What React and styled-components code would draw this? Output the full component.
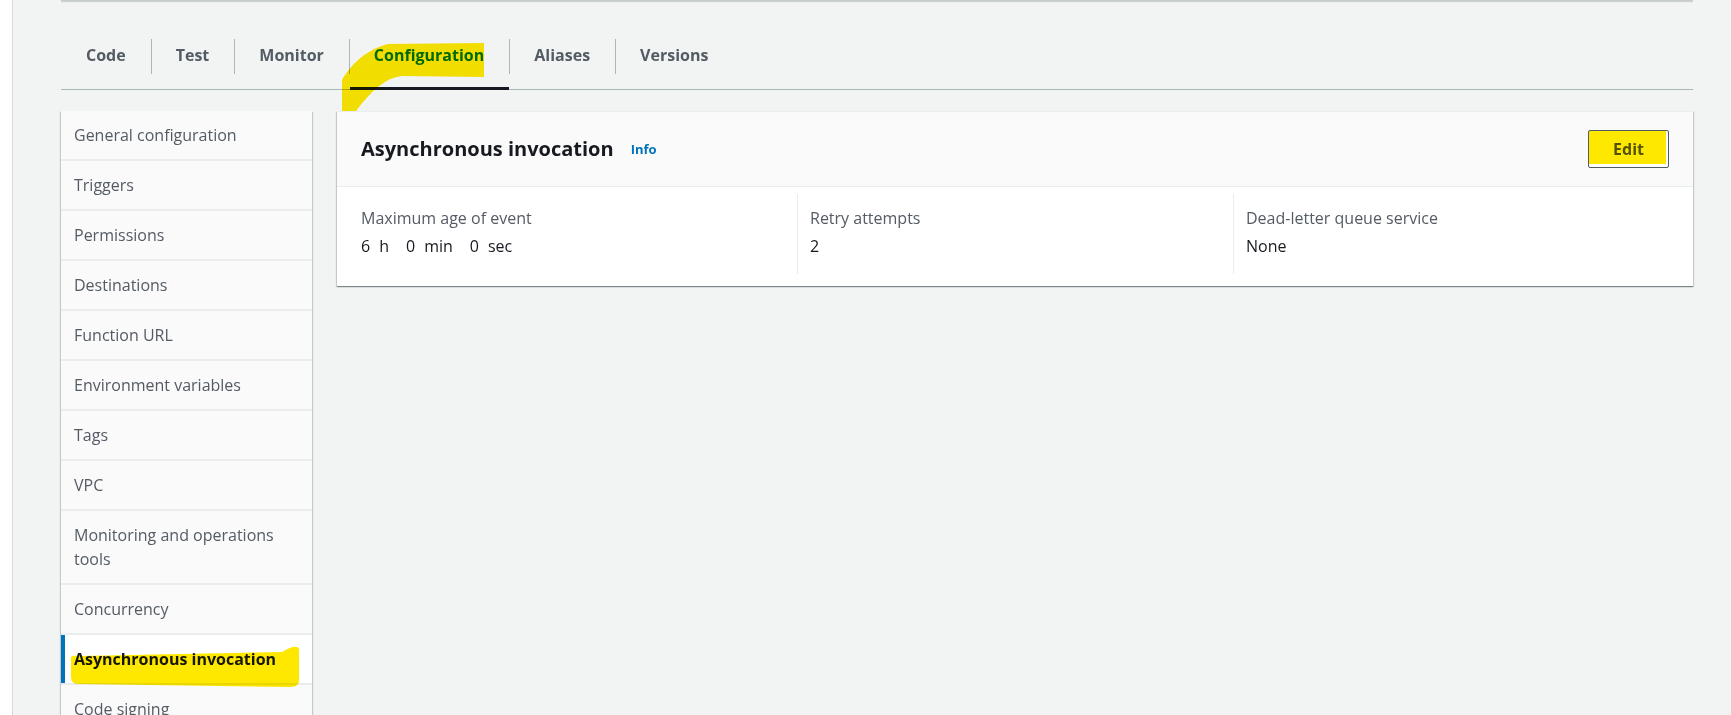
import React from 'react';
import styled, { createGlobalStyle } from 'styled-components';

const GlobalStyle = createGlobalStyle`
  body {
    margin: 0;
    background: #f2f3f3;
    font-family: "Open Sans", Roboto, "Liberation Sans", sans-serif;
    overflow: hidden;
  }
`

const Shell = styled.div`
  position: relative;
  display: flex;
  min-height: 100vh;
`

const Rail = styled.div`
  width: 12px;
  flex-shrink: 0;
  background: #ffffff;
  border-right: 1px solid #d5dbdb;
`

const Main = styled.div`
  flex: 1;
  padding: 0 38px 0 48px;
`

const TopEdge = styled.div`
  height: 1px;
  background: #c6cccc;
  box-shadow: 0 1px 1px rgba(0, 28, 36, 0.2);
`

const TabBar = styled.div`
  display: flex;
  padding-top: 19px;
  border-bottom: 1px solid #aab7b8;
`

const Tab = styled.div`
  position: relative;
  display: flex;
  align-items: center;
  height: 69px;
  padding: 0 25px;
  font-size: 16px;
  font-weight: 700;
  color: ${props => props.active ? '#0073bb' : '#545b64'};

  &:not(:first-child)::before {
    content: '';
    position: absolute;
    left: 0;
    top: 19px;
    height: 35px;
    width: 1px;
    background: #aab7b8;
  }

  &::after {
    content: '';
    display: ${props => props.active ? 'block' : 'none'};
    position: absolute;
    left: 1px;
    right: 0;
    bottom: -1px;
    height: 3px;
    background: #16191f;
  }
`

const Content = styled.div`
  display: grid;
  grid-template-columns: 251px 1fr;
  gap: 25px;
  align-items: start;
  margin-top: 21px;
`

const Sidebar = styled.nav`
  background: #fafafa;
  box-shadow: 0 1px 1px 0 rgba(0, 28, 36, 0.3), 1px 1px 1px 0 rgba(0, 28, 36, 0.15), -1px 1px 1px 0 rgba(0, 28, 36, 0.15);
`

const NavItem = styled.div`
  padding: 12px 12px 12px 13px;
  font-size: 16px;
  line-height: 24px;
  color: ${props => props.active ? '#16191f' : '#545b64'};
  font-weight: ${props => props.active ? 700 : 400};
  background: ${props => props.active ? '#ffffff' : 'transparent'};
  box-shadow: ${props => props.active ? 'inset 4px 0 0 #0073bb' : 'none'};

  &:not(:first-child) {
    border-top: 2px solid #eaeded;
  }
`

const Panel = styled.section`
  background: #ffffff;
  box-shadow: 0 1px 1px 0 rgba(0, 28, 36, 0.3), 1px 1px 1px 0 rgba(0, 28, 36, 0.15), -1px 1px 1px 0 rgba(0, 28, 36, 0.15);
`

const PanelHeader = styled.header`
  display: flex;
  align-items: center;
  justify-content: space-between;
  padding: 18px 24px;
  background: #fafafa;
  border-top: 1px solid #eaeded;
  border-bottom: 1px solid #eaeded;
`

const TitleRow = styled.div`
  display: flex;
  align-items: center;
  gap: 17px;
`

const Title = styled.h2`
  margin: 0;
  font-size: 20px;
  line-height: 28px;
  font-weight: 700;
  color: #16191f;
`

const InfoLink = styled.a`
  font-size: 13px;
  font-weight: 700;
  color: #0073bb;
  text-decoration: none;
`

const Button = styled.button`
  height: 38px;
  padding: 0 24px;
  background: #ffffff;
  border: 1px solid #545b64;
  border-radius: 2px;
  font-family: inherit;
  font-size: 16px;
  font-weight: 700;
  color: #545b64;
`

const PanelBody = styled.div`
  display: grid;
  grid-template-columns: repeat(3, 1fr);
  padding: 7px 24px 12px;
`

const Column = styled.div`
  padding: 12px 0 16px;

  & + & {
    border-left: 1px solid #eaeded;
    padding-left: 12px;
  }
`

const Label = styled.div`
  font-size: 16px;
  line-height: 24px;
  color: #545b64;
`

const Value = styled.div`
  margin-top: 4px;
  font-size: 16px;
  line-height: 24px;
  color: #16191f;
`

const Unit = styled.span`
  margin-right: 17px;
`

const Num = styled.span`
  margin-right: 9px;
`

const Highlighter = styled.svg`
  position: absolute;
  left: 0;
  top: 0;
  pointer-events: none;
  mix-blend-mode: multiply;
`

const tabs = ['Code', 'Test', 'Monitor', 'Configuration', 'Aliases', 'Versions'];

const navItems = [
  'General configuration',
  'Triggers',
  'Permissions',
  'Destinations',
  'Function URL',
  'Environment variables',
  'Tags',
  'VPC',
  'Monitoring and operations tools',
  'Concurrency',
  'Asynchronous invocation',
  'Code signing',
];

function App() {
  return (
    <Shell>
      <GlobalStyle />
      <Rail />
      <Main>
        <TopEdge />
        <TabBar>
          {tabs.map(t => (
            <Tab key={t} active={t === 'Configuration'}>{t}</Tab>
          ))}
        </TabBar>

        <Content>
          <Sidebar>
            {navItems.map(item => (
              <NavItem key={item} active={item === 'Asynchronous invocation'}>{item}</NavItem>
            ))}
          </Sidebar>

          <Panel>
            <PanelHeader>
              <TitleRow>
                <Title>Asynchronous invocation</Title>
                <InfoLink href="#">Info</InfoLink>
              </TitleRow>
              <Button>Edit</Button>
            </PanelHeader>
            <PanelBody>
              <Column>
                <Label>Maximum age of event</Label>
                <Value>
                  <Unit><Num>6</Num>h</Unit>
                  <Unit><Num>0</Num>min</Unit>
                  <span><Num>0</Num>sec</span>
                </Value>
              </Column>
              <Column>
                <Label>Retry attempts</Label>
                <Value>2</Value>
              </Column>
              <Column>
                <Label>Dead-letter queue service</Label>
                <Value>None</Value>
              </Column>
            </PanelBody>
          </Panel>
        </Content>
      </Main>

      {/* marker strokes drawn over the screenshot */}
      <Highlighter width="1731" height="715" viewBox="0 0 1731 715">
        <g fill="#ffe800">
          <path d="M342 111 L342 80 C350 66 365 50 388 44 L484 43 L484 77 L402 76 C385 78 372 90 356 111 Z" />
          <path d="M71 658 C71 655 74 656 80 656 L282 652 C292 646 299 645 299 650 L299 681 C299 686 294 687 288 687 L78 684 C72 684 71 680 71 676 Z" />
          <rect x="1589" y="131" width="77" height="33" />
        </g>
      </Highlighter>
    </Shell>
  );
}

export default App;
